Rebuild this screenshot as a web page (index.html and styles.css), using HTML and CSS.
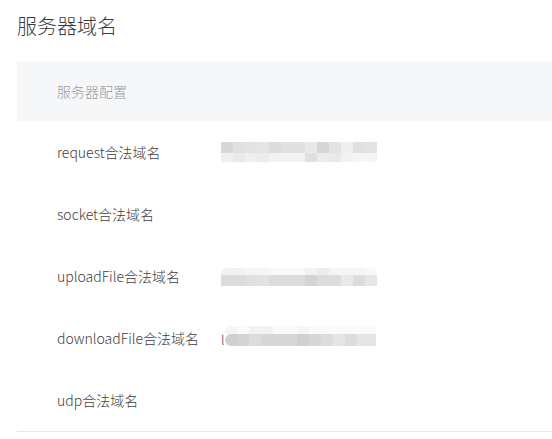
FILE: index.html
```html
<!DOCTYPE html>
<html lang="zh-CN">
<head>
<meta charset="utf-8">
<title>服务器域名</title>
<link rel="stylesheet" href="styles.css">
</head>
<body>
<div class="page">
  <h1 class="title">服务器域名</h1>
  <div class="table">
    <div class="thead">服务器配置</div>
    <div class="row">
      <div class="label">request合法域名</div>
      <div class="value">
        <div class="mosaic m1">
          <div class="mrow tall">
            <i class="s3"></i><i class="s5"></i><i class="s6"></i><i class="s7"></i><i class="s4"></i><i class="s5"></i><i class="s5"></i><i class="s8"></i><i class="s3"></i><i class="s6"></i><i class="s10"></i><i class="s5"></i><i class="s6"></i>
          </div>
          <div class="mrow short">
            <i class="s10"></i><i class="s8"></i><i class="s10"></i><i class="s9"></i><i class="s11"></i><i class="s11"></i><i class="s11"></i><i class="s5"></i><i class="s9"></i><i class="s8"></i><i class="s11"></i><i class="s12 fadeb"></i><i class="s12 fadeb2"></i>
          </div>
        </div>
      </div>
    </div>
    <div class="row">
      <div class="label">socket合法域名</div>
      <div class="value"></div>
    </div>
    <div class="row">
      <div class="label">uploadFile合法域名</div>
      <div class="value">
        <div class="mosaic m3">
          <div class="mrow short2">
            <i class="s11 rtl"></i><i class="s11"></i><i class="s12"></i><i class="s12"></i><i class="s13"></i><i class="s13"></i><i class="s13"></i><i class="s11"></i><i class="s9"></i><i class="s12"></i><i class="s12"></i><i class="s12"></i><i class="s13 rtr"></i>
          </div>
          <div class="mrow tall">
            <i class="s4"></i><i class="s4"></i><i class="s5"></i><i class="s6"></i><i class="s4"></i><i class="s4"></i><i class="s4"></i><i class="s2"></i><i class="s4"></i><i class="s4"></i><i class="s8"></i><i class="s4"></i><i class="s7"></i>
          </div>
        </div>
      </div>
    </div>
    <div class="row">
      <div class="label">downloadFile合法域名</div>
      <div class="value">
        <span class="ch">l</span>
        <div class="mosaic m4">
          <div class="mrow short3">
            <i class="s12 rtl"></i><i class="s14"></i><i class="s11"></i><i class="s11"></i><i class="s14"></i><i class="s14"></i><i class="s12"></i><i class="s14"></i><i class="s14"></i><i class="s14"></i><i class="s14"></i><i class="s14"></i><i class="s14 narrow"></i>
          </div>
          <div class="mrow tall2">
            <i class="s1 rbl"></i><i class="s2"></i><i class="s4"></i><i class="s3"></i><i class="s3"></i><i class="s3"></i><i class="s1"></i><i class="s3"></i><i class="s4"></i><i class="s7"></i><i class="s4"></i><i class="s7"></i><i class="s7 narrow"></i>
          </div>
        </div>
      </div>
    </div>
    <div class="row last">
      <div class="label">udp合法域名</div>
      <div class="value"></div>
    </div>
  </div>
</div>
</body>
</html>
```
FILE: styles.css
```css
html, body {
  margin: 0;
  padding: 0;
  background: #ffffff;
}
body {
  font-family: "Noto Sans CJK SC", "Noto Sans", "Liberation Sans", sans-serif;
  color: #353535;
}
.page {
  padding: 12px 0 0 17px;
}
.title {
  margin: 0;
  font-size: 20px;
  font-weight: 300;
  line-height: 28px;
  color: #3a3a3a;
}
.table {
  margin-top: 21px;
  border-bottom: 1px solid #e7e7e7;
}
.thead {
  height: 60px;
  background: #f6f7f9;
  display: flex;
  align-items: center;
  padding-left: 40px;
  font-size: 14px;
  font-weight: 300;
  color: #9a9a9a;
}
.row {
  height: 62px;
  display: flex;
  align-items: center;
  font-size: 14px;
  font-weight: 300;
  color: #3e3e3e;
}
.label {
  width: 164px;
  padding-left: 40px;
  flex: none;
  white-space: nowrap;
}
.value {
  display: flex;
  align-items: center;
}
.mosaic {
  display: flex;
  flex-direction: column;
}
.mrow {
  display: flex;
}
.mrow i {
  display: block;
  width: 12px;
  flex: none;
}
.mrow i.narrow { width: 7px; }
.tall { height: 11px; }
.short { height: 9px; }
.short2 { height: 7px; }
.tall2 { height: 12px; }
.short3 { height: 8px; }
.m3 { margin-top: 1px; }
.m4 { margin-left: 1px; margin-top: -4px; }
.ch {
  font-size: 13px;
  color: #444444;
  line-height: 14px;
  margin-top: 4px;
}
.rtl { border-top-left-radius: 6px; }
.rtr { border-top-right-radius: 6px; }
.rbl { border-bottom-left-radius: 6px; border-top-left-radius: 6px; }
.fadeb { border-bottom-right-radius: 4px; }
.fadeb2 { border-bottom-left-radius: 8px 2px; }
.s1 { background: #d0d0d0; }
.s2 { background: #d4d4d4; }
.s3 { background: #d7d7d7; }
.s4 { background: #dcdcdc; }
.s5 { background: #e0e0e0; }
.s6 { background: #e3e3e3; }
.s7 { background: #e6e6e6; }
.s8 { background: #e9e9e9; }
.s9 { background: #ececec; }
.s10 { background: #efefef; }
.s11 { background: #f2f2f2; }
.s12 { background: #f5f5f5; }
.s13 { background: #f8f8f8; }
.s14 { background: #fafafa; }
```
